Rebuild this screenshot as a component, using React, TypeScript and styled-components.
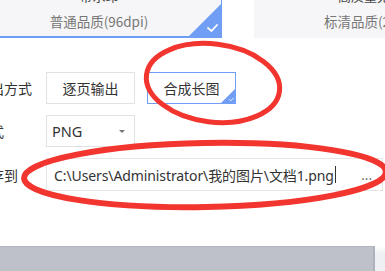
import styled, { createGlobalStyle } from 'styled-components';

const GlobalStyle = createGlobalStyle`
  html, body {
    margin: 0;
    padding: 0;
    background: #ffffff;
    overflow: hidden;
  }
  body {
    font-family: "Noto Sans CJK SC", "Noto Sans", sans-serif;
    color: #333;
  }
`;

const qualityOptions = [
  { title: '带水印', desc: '普通品质(96dpi)', active: true },
  { title: '高质量无水印', desc: '标清品质(200dpi)', active: false },
];

function App() {
  return (
    <>
      <GlobalStyle />
      <Page>
        <Content>
          <CardRow>
            {qualityOptions.map((opt) => (
              <Card key={opt.desc} $active={opt.active}>
                <CardTitle>{opt.title}</CardTitle>
                <CardDesc>{opt.desc}</CardDesc>
                {opt.active && <CornerCheck $size={32} />}
              </Card>
            ))}
          </CardRow>

          <Form>
            <Row>
              <Label>输出方式</Label>
              <Choice>逐页输出</Choice>
              <Choice $active>
                合成长图
                <CornerCheck $size={14} />
              </Choice>
            </Row>
            <Row>
              <Label>格式</Label>
              <Select>
                PNG
                <Caret />
              </Select>
            </Row>
            <Row>
              <Label>保存到</Label>
              <PathInput>
                <PathText>C:\Users\Administrator\我的图片\文档1.png</PathText>
                <Cursor />
                <Browse>...</Browse>
              </PathInput>
            </Row>
          </Form>
        </Content>

        <Footer>
          <FooterBar />
          <FooterEdge />
        </Footer>

        <Marks viewBox="0 0 385 271" width="385" height="271">
          <ellipse
            cx="213"
            cy="83"
            rx="67"
            ry="39"
            transform="rotate(7 213 83)"
            fill="none"
            stroke="#f2352f"
            strokeWidth="5"
          />
          <ellipse
            cx="205"
            cy="175"
            rx="181"
            ry="32"
            transform="rotate(-1 205 175)"
            fill="none"
            stroke="#f2352f"
            strokeWidth="6"
          />
        </Marks>
      </Page>
    </>
  );
}

function CornerCheck({ $size }: { $size: number }) {
  return (
    <Corner $size={$size}>
      <svg width={$size} height={$size} viewBox="0 0 32 32">
        <polygon points="32,0 32,32 0,32" fill="#6f9ef4" />
        <polyline
          points="19,24 22.5,27 28,21"
          fill="none"
          stroke="#ffffff"
          strokeWidth="1.8"
          strokeLinecap="round"
          strokeLinejoin="round"
        />
      </svg>
    </Corner>
  );
}

const Page = styled.div`
  position: relative;
  width: 385px;
  height: 271px;
  overflow: hidden;
  display: flex;
  flex-direction: column;
`;

const Content = styled.div`
  margin: -23px 0 0 -24px;
  flex: 1;
`;

const CardRow = styled.div`
  display: flex;
  gap: 32px;
`;

const Card = styled.div<{ $active?: boolean }>`
  position: relative;
  box-sizing: border-box;
  width: 246px;
  height: 61px;
  flex-shrink: 0;
  background: #f6f6f8;
  border: 1px solid ${(p) => (p.$active ? '#6f9ef4' : '#f6f6f8')};
  border-bottom-width: 2px;
  display: flex;
  flex-direction: column;
  align-items: center;
  padding-top: 9px;
  overflow: hidden;
`;

const CardTitle = styled.div`
  font-size: 13px;
  line-height: 18px;
  color: #444;
`;

const CardDesc = styled.div`
  margin-top: 6px;
  font-size: 13.5px;
  line-height: 20px;
  color: #777;
`;

const Corner = styled.div<{ $size: number }>`
  position: absolute;
  right: 0;
  bottom: 0;
  width: ${(p) => p.$size}px;
  height: ${(p) => p.$size}px;
  line-height: 0;
`;

const Form = styled.div`
  margin-top: 34px;
  display: flex;
  flex-direction: column;
  gap: 11px;
`;

const Row = styled.div`
  display: flex;
  align-items: center;
  gap: 12px;
`;

const Label = styled.div`
  width: 58px;
  font-size: 14px;
  color: #333;
  white-space: nowrap;
`;

const Choice = styled.div<{ $active?: boolean }>`
  position: relative;
  box-sizing: border-box;
  width: 89px;
  height: 32px;
  display: flex;
  align-items: center;
  justify-content: center;
  font-size: 14px;
  color: #333;
  background: #fff;
  border: 1px solid ${(p) => (p.$active ? '#6f9ef4' : '#e2e2e2')};
  overflow: hidden;
`;

const Select = styled.div`
  box-sizing: border-box;
  width: 89px;
  height: 32px;
  display: flex;
  align-items: center;
  justify-content: space-between;
  padding: 0 9px 0 5px;
  font-family: "Noto Sans", sans-serif;
  font-size: 14.5px;
  color: #333;
  border: 1px solid #e2e2e2;
`;

const Caret = styled.span`
  width: 0;
  height: 0;
  border-left: 3px solid transparent;
  border-right: 3px solid transparent;
  border-top: 3px solid #777;
`;

const PathInput = styled.div`
  box-sizing: border-box;
  width: 337px;
  height: 33px;
  display: flex;
  align-items: center;
  padding: 0 10px 0 7px;
  font-size: 14px;
  color: #333;
  border: 1px solid #e6e6e6;
  flex-shrink: 0;
`;

const PathText = styled.span`
  font-family: "Noto Sans", "Noto Sans CJK SC", sans-serif;
  white-space: nowrap;
  letter-spacing: -0.1px;
`;

const Cursor = styled.span`
  width: 1px;
  height: 17px;
  margin-left: 1px;
  background: #333;
`;

const Browse = styled.span`
  margin-left: auto;
  color: #555;
  font-size: 13px;
`;

const Footer = styled.div`
  display: flex;
  height: 25px;
`;

const FooterBar = styled.div`
  flex: 1;
  background: #bec1ca;
  border-top: 1px solid #b2b5bf;
  border-right: 2px solid #aeb2bc;
`;

const FooterEdge = styled.div`
  width: 10px;
  background: linear-gradient(#ffffff, #eff0f3 30%);
`;

const Marks = styled.svg`
  position: absolute;
  left: 0;
  top: 0;
  pointer-events: none;
`;

export default App;
